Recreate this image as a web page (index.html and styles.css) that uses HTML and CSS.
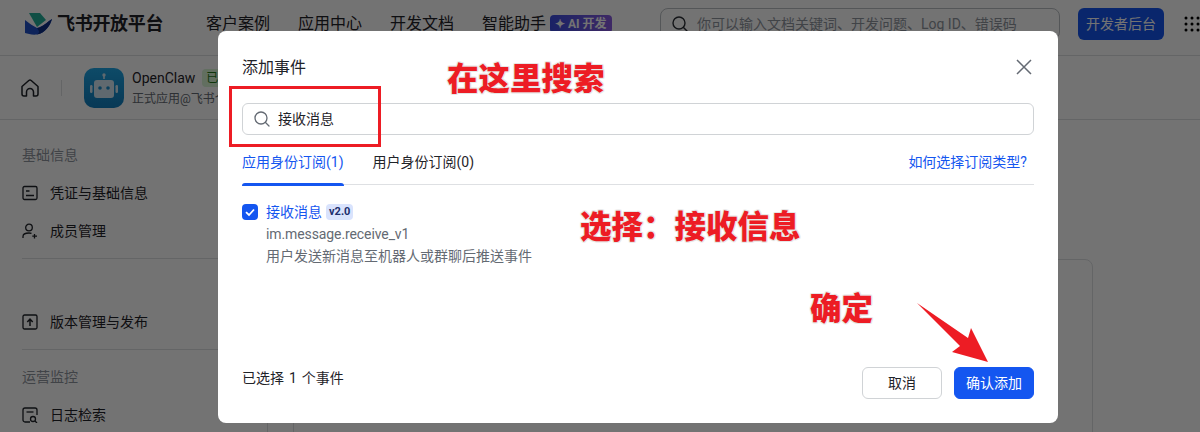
FILE: index.html
```html
<!DOCTYPE html>
<html lang="zh-CN">
<head>
<meta charset="utf-8">
<title>飞书开放平台</title>
<link rel="stylesheet" href="styles.css">
</head>
<body>
<div class="page">
  <header class="topbar">
    <div class="brand">
      <svg class="brand-logo" viewBox="0 0 28 22" width="28" height="22">
        <path d="M4 0H15L21 7L12 14Z" fill="#22b09a"/>
        <path d="M0 7C4 10 8 13 12 15C18 14 22 9 27 6C25 13 20 20 12 21.500C7 22 3 21 0 20Z" fill="#2151c8"/>
        <path d="M12 15C18 14 22 9 27 6C25 13 20 20 12 21.500C16 19 13 17 12 15Z" fill="#0f2f86"/>
      </svg>
      <span class="brand-name">飞书开放平台</span>
    </div>
    <nav class="topnav">
      <span>客户案例</span><span>应用中心</span><span>开发文档</span>
      <span class="topnav-ai">智能助手<b class="ai-badge">✦ AI 开发</b></span>
    </nav>
    <div class="topsearch">
      <svg class="icon16" viewBox="0 0 16 16"><circle cx="7" cy="7" r="6" fill="none" stroke="#2b2f36" stroke-width="1.400"/><path d="M11.500 11.500L15 15" stroke="#2b2f36" stroke-width="1.400" stroke-linecap="round"/></svg>
      <span>你可以输入文档关键词、开发问题、Log ID、错误码</span>
    </div>
    <div class="console-btn">开发者后台</div>
    <svg class="apps" viewBox="0 0 16 16" width="16" height="16">
      <g fill="#000"><circle cx="2" cy="2" r="1.500"/><circle cx="8" cy="2" r="1.500"/><circle cx="14" cy="2" r="1.500"/><circle cx="2" cy="8" r="1.500"/><circle cx="8" cy="8" r="1.500"/><circle cx="14" cy="8" r="1.500"/><circle cx="2" cy="14" r="1.500"/><circle cx="8" cy="14" r="1.500"/><circle cx="14" cy="14" r="1.500"/></g>
    </svg>
  </header>

  <div class="appbar">
    <svg class="home" viewBox="0 0 18 18" width="18" height="18"><path d="M1 7.500L7.800 1.500a2 2 0 0 1 2.400 0L17 7.500V15a2 2 0 0 1-2 2H12.500V13a3.500 3.500 0 0 0-7 0V17H3a2 2 0 0 1-2-2Z" fill="none" stroke="#1f2329" stroke-width="1.500" stroke-linejoin="round"/></svg>
    <i class="appbar-sep"></i>
    <div class="app-icon">
      <svg viewBox="0 0 40 40" width="40" height="40">
        <path d="M20 7V11" stroke="#d4e9f5" stroke-width="1.600"/><circle cx="20" cy="7" r="1.700" fill="#d4e9f5"/>
        <rect x="10" y="12" width="20" height="18" rx="3" fill="#d4e9f5"/>
        <rect x="6" y="17" width="2.500" height="8" rx="1.200" fill="#d4e9f5"/><rect x="31.500" y="17" width="2.500" height="8" rx="1.200" fill="#d4e9f5"/>
        <circle cx="16" cy="20" r="1.800" fill="#1a8ccc"/><circle cx="24" cy="20" r="1.800" fill="#1a8ccc"/>
      </svg>
    </div>
    <div class="app-meta">
      <div class="app-title"><span>OpenClaw</span><b class="status">已启用</b></div>
      <div class="app-sub">正式应用@飞书个人版</div>
    </div>
  </div>

  <div class="workspace">
    <aside class="sidebar">
      <div class="side-label">基础信息</div>
      <div class="side-item">
        <svg class="icon16" viewBox="0 0 16 16"><rect x="1" y="1.500" width="14" height="13" rx="1.500" fill="none" stroke="#1f2329" stroke-width="1.300"/><path d="M4 6H7.500M4 10.500H12" stroke="#1f2329" stroke-width="1.300"/></svg>
        <span>凭证与基础信息</span>
      </div>
      <div class="side-item">
        <svg class="icon16" viewBox="0 0 16 16"><circle cx="7" cy="4.500" r="3.300" fill="none" stroke="#1f2329" stroke-width="1.300"/><path d="M1 15V13.500C1 11 3 10 7 10C8 10 9 10.100 9.500 10.300M12.500 11V15.500M10.300 13.200H15" fill="none" stroke="#1f2329" stroke-width="1.300"/></svg>
        <span>成员管理</span>
      </div>
      <hr class="side-rule side-rule-a">
      <div class="side-item side-item-release">
        <svg class="icon16" viewBox="0 0 16 16"><rect x="1" y="1" width="14" height="14" rx="1.500" fill="none" stroke="#1f2329" stroke-width="1.300"/><path d="M8 12V5.500M5.300 8L8 5L10.700 8" fill="none" stroke="#1f2329" stroke-width="1.500"/></svg>
        <span>版本管理与发布</span>
      </div>
      <hr class="side-rule side-rule-b">
      <div class="side-label side-label-ops">运营监控</div>
      <div class="side-item">
        <svg class="icon16" viewBox="0 0 16 16"><path d="M8 15H3a2 2 0 0 1-2-2V3a2 2 0 0 1 2-2h10a2 2 0 0 1 2 2v5" fill="none" stroke="#1f2329" stroke-width="1.300"/><path d="M4.500 5H11.500" stroke="#1f2329" stroke-width="1.300"/><circle cx="11" cy="12" r="2.500" fill="none" stroke="#1f2329" stroke-width="1.300"/><path d="M13 14L15 16" stroke="#1f2329" stroke-width="1.300"/></svg>
        <span>日志检索</span>
      </div>
    </aside>
    <main class="content"><div class="card"></div></main>
  </div>
</div>

<div class="scrim"></div>

<section class="modal">
  <div class="modal-head">
    <h2>添加事件</h2>
    <svg class="close" viewBox="0 0 16 16" width="16" height="16"><path d="M1 1L15 15M15 1L1 15" stroke="#646a73" stroke-width="1.500"/></svg>
  </div>
  <div class="modal-search">
    <svg class="icon16" viewBox="0 0 16 16"><circle cx="7" cy="7" r="6" fill="none" stroke="#646a73" stroke-width="1.300"/><path d="M11.500 11.500L15 15" stroke="#646a73" stroke-width="1.300" stroke-linecap="round"/></svg>
    <span>接收消息</span>
  </div>
  <div class="tabs">
    <span class="tab tab-active">应用身份订阅(1)</span>
    <span class="tab">用户身份订阅(0)</span>
    <a class="tabs-link">如何选择订阅类型?</a>
  </div>
  <div class="event">
    <svg class="check" viewBox="0 0 16 16" width="16" height="16"><rect width="16" height="16" rx="4" fill="#1456f0"/><path d="M4 8.200L7 11L12 5.500" fill="none" stroke="#fff" stroke-width="1.800"/></svg>
    <div class="event-body">
      <div class="event-title"><span>接收消息</span><b class="tag">v2.0</b></div>
      <div class="event-line event-key">im.message.receive_v1</div>
      <div class="event-line">用户发送新消息至机器人或群聊后推送事件</div>
    </div>
  </div>
  <div class="modal-foot">
    <span class="count">已选择 1 个事件</span>
    <button class="btn">取消</button>
    <button class="btn btn-primary">确认添加</button>
  </div>
</section>

<div class="mark mark-box"></div>
<div class="note note-search">在这里搜索</div>
<div class="note note-pick">选择&#xFF1A;接收信息</div>
<div class="note note-ok">确定</div>
<svg class="mark-arrow" viewBox="0 0 80 70" width="80" height="70"><polygon points="2,8 53,43 56,33 73,67 37,57 45,51" fill="#ed1c24"/></svg>
</body>
</html>
```
FILE: styles.css
```css
* { box-sizing: border-box; }
html, body { margin: 0; height: 432px; overflow: hidden; }
body { background: #fff; color: #1f2329; font: 14px/22px Roboto, "Noto Sans CJK SC", sans-serif; position: relative; }
svg { display: block; flex: none; }
.icon16 { width: 16px; height: 16px; }

.page { height: 432px; overflow: hidden; }
.topbar { height: 56px; border-bottom: 1px solid #dee0e3; display: flex; align-items: center; padding: 0 0 7px 25px; }
.brand { display: flex; align-items: center; gap: 4px; width: 181px; }
.brand-name { font-size: 18px; font-weight: 700; letter-spacing: -.3px; }
.topnav { display: flex; gap: 28px; font-size: 16px; width: 454px; }
.topnav-ai { display: flex; align-items: center; gap: 4px; }
.ai-badge { height: 18px; padding: 0 5px; border-radius: 4px; background: linear-gradient(90deg, #3a4de0, #8a5be0); color: #fff; font-size: 12px; line-height: 18px; white-space: nowrap; }
.topsearch { width: 400px; height: 32px; border: 1px solid #bbbfc4; border-radius: 8px; display: flex; align-items: center; gap: 9px; padding-left: 11px; color: #8f959e; }
.console-btn { width: 86px; height: 32px; margin-left: 18px; border-radius: 6px; background: #1456f0; color: #fff; text-align: center; line-height: 32px; }
.apps { margin-left: 20px; }

.appbar { height: 64px; border-bottom: 1px solid #dee0e3; display: flex; align-items: center; padding-left: 21px; }
.appbar-sep { width: 1px; height: 16px; background: #dee0e3; margin: 0 22px; }
.app-icon { width: 40px; height: 40px; border-radius: 10px; background: linear-gradient(180deg, #1ea6e6, #117dbd); }
.app-meta { margin-left: 8px; }
.app-title { display: flex; align-items: center; gap: 7px; line-height: 22px; }
.status { font-weight: 400; font-size: 12px; line-height: 18px; padding: 0 4px; border-radius: 4px; background: #d9f5d6; color: #237b19; }
.app-sub { font-size: 12px; line-height: 20px; color: #646a73; white-space: nowrap; }

.workspace { display: flex; height: 312px; }
.sidebar { width: 268px; border-right: 1px solid #dee0e3; padding: 24px 0 0 22px; flex: none; }
.side-label { color: #8f959e; line-height: 22px; }
.side-item { height: 38px; display: flex; align-items: center; gap: 12px; }
.side-label + .side-item { margin-top: 8px; }
.side-rule { border: 0; height: 1px; background: #dee0e3; margin: 0; }
.side-rule-a { margin-top: 8px; }
.side-item-release { margin-top: 44px; }
.side-rule-b { margin-top: 8px; }
.side-label-ops { margin-top: 16px; }
.content { flex: 1; padding: 139px 107px 0 25px; }
.card { height: 200px; border: 1px solid #dee0e3; border-radius: 8px; }

.scrim { position: absolute; inset: 0; background: rgba(0, 0, 0, .55); }

.modal { position: absolute; left: 218px; top: 31px; width: 840px; height: 392px; background: #fff; border-radius: 8px; padding: 24px; display: flex; flex-direction: column; }
.modal-head { display: flex; justify-content: space-between; align-items: center; height: 24px; }
.modal-head h2 { margin: 2px 0 0; font-size: 16px; font-weight: 400; line-height: 24px; }
.close { margin-right: 2px; }
.modal-search { margin-top: 24px; height: 32px; border: 1px solid #d0d3d6; border-radius: 6px; display: flex; align-items: center; gap: 8px; padding-left: 11px; }
.tabs { margin-top: 16px; height: 34px; border-bottom: 1px solid #dee0e3; display: flex; gap: 29px; }
.tab { line-height: 22px; height: 34px; white-space: nowrap; }
.tab-active { color: #1456f0; position: relative; }
.tab-active::after { content: ""; position: absolute; left: 0; right: 0; bottom: -1px; height: 3px; border-radius: 3px 3px 0 0; background: #1456f0; }
.tabs-link { margin-left: auto; margin-right: 7px; color: #1456f0; }
.event { margin-top: 19px; display: flex; gap: 8px; }
.event-title { display: flex; align-items: center; gap: 4px; color: #1456f0; height: 16px; }
.tag { height: 16px; padding: 0 3px; border-radius: 4px; background: #d9e3fd; color: #1d2f6e; font-size: 11px; line-height: 16px; font-weight: 700; }
.event-line { color: #646a73; line-height: 22px; }
.event-key { letter-spacing: -.1px; }
.event-title + .event-line { margin-top: 3px; }
.modal-foot { margin-top: auto; display: flex; align-items: flex-start; gap: 12px; }
.count { margin-right: auto; word-spacing: 1.500px; }
.btn { width: 80px; height: 32px; border: 1px solid #d0d3d6; border-radius: 6px; background: #fff; color: #1f2329; font: inherit; padding: 0; }
.btn-primary { background: #1456f0; border-color: #1456f0; color: #fff; }

.mark-box { position: absolute; left: 229px; top: 86px; width: 152px; height: 61px; border: 3px solid #ed1c24; }
.note { position: absolute; font-size: 31.500px; line-height: 40px; font-weight: 900; color: #ed1c24; white-space: nowrap; text-shadow: 1px 0 #e6e6e6, -1px 0 #e6e6e6, 0 1px #e6e6e6, 0 -1px #e6e6e6, 1px 1px #eee, -1px -1px #eee, 1px -1px #eee, -1px 1px #eee; }
.note-search { left: 447px; top: 60px; }
.note-pick { left: 580px; top: 208px; }
.note-ok { left: 810px; top: 290px; }
.mark-arrow { position: absolute; left: 915px; top: 295px; }
```
